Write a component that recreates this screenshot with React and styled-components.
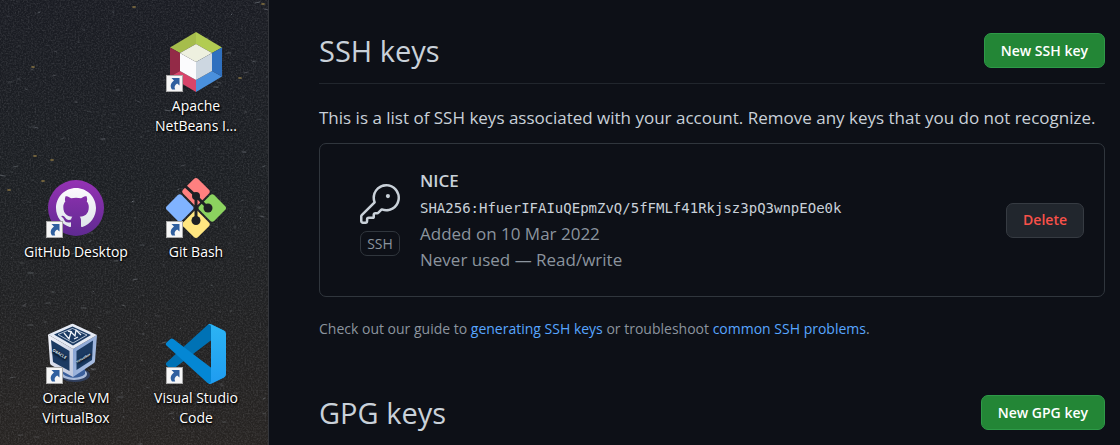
import React from "react";
import styled, { createGlobalStyle } from "styled-components";

const GlobalStyle = createGlobalStyle`
  *, *::before, *::after { box-sizing: border-box; }
  body {
    margin: 0;
    background: #0d1017;
    color: #c9d1d9;
    font-family: "Open Sans", "Noto Sans", sans-serif;
    font-size: 17px;
    line-height: 26px;
  }
  h2, h3, p, ul { margin: 0; padding: 0; }
`;

const Screen = styled.div`
  display: grid;
  grid-template-columns: 269px minmax(0, 1fr);
  min-height: 100vh;
`;

/* ---------- desktop ---------- */

const Desktop = styled.aside`
  position: relative;
  overflow: hidden;
  border-right: 1px solid #33353a;
  background: linear-gradient(180deg, #1a1c23 0%, #1c1f23 40%, #202123 65%, #272422 100%);
`;

const Sky = styled.svg`
  position: absolute;
  inset: 0;
  width: 100%;
  height: 100%;
`;

const IconGrid = styled.ul`
  position: relative;
  display: grid;
  grid-template-columns: 120px 120px;
  justify-content: center;
  row-gap: 42px;
  padding: 32px 12px 16px 16px;
  list-style: none;
`;

const IconCell = styled.li`
  grid-column: ${(p) => p.$column};
  min-height: 104px;
`;

const Shortcut = styled.a`
  display: flex;
  flex-direction: column;
  align-items: center;
  gap: 4px;
  color: #fff;
  font-size: 14px;
  line-height: 20px;
  text-align: center;
  text-decoration: none;
  text-shadow: 1px 1px 2px #000, 0 1px 3px #000;
`;

const IconBox = styled.span`
  position: relative;
  width: 60px;
  height: 60px;

  & > svg { display: block; overflow: visible; }
`;

const ArrowBadge = styled.span`
  position: absolute;
  left: 0;
  bottom: 0;
  width: 17px;
  height: 17px;
  border: 1px solid #a9a9a9;
  background: #f6f6f6;

  & > svg { display: block; }
`;

const Label = styled.span`
  width: 104px;
  white-space: ${(p) => (p.$oneLine ? "nowrap" : "normal")};
  display: flex;
  justify-content: center;
`;

/* ---------- settings page ---------- */

const Main = styled.main`
  padding: 28px 15px 0 50px;
`;

const SectionHeader = styled.header`
  display: flex;
  align-items: center;
  justify-content: space-between;
  padding-bottom: 10px;
  border-bottom: ${(p) => (p.$ruled ? "1px solid #21262d" : "0")};
`;

const Title = styled.h2`
  font-size: 29px;
  font-weight: 400;
  line-height: 45px;
`;

const Button = styled.button`
  height: 35px;
  padding: 0 16px;
  border: 1px solid ${(p) => (p.$danger ? "#363b42" : "#2e9a48")};
  border-radius: 7px;
  background: ${(p) => (p.$danger ? "#21262d" : "#238636")};
  color: ${(p) => (p.$danger ? "#f85149" : "#fff")};
  font-family: inherit;
  font-size: 14px;
  font-weight: 600;
  line-height: 20px;
  white-space: nowrap;
`;

const Intro = styled.p`
  padding: 21px 0 12px;
`;

const KeyCard = styled.article`
  display: flex;
  align-items: center;
  padding: 23px 20px;
  border: 1px solid #30363d;
  border-radius: 7px;
`;

const KeyType = styled.div`
  display: flex;
  flex-direction: column;
  align-items: center;
  gap: 7px;
  width: 40px;
  margin: 0 20px;
`;

const Tag = styled.span`
  width: 40px;
  border: 1px solid #30363d;
  border-radius: 7px;
  color: #8b949e;
  font-size: 14px;
  line-height: 23px;
  text-align: center;
`;

const KeyDetails = styled.div`
  flex: 1;
  min-width: 0;
  color: #8b949e;
`;

const KeyName = styled.h3`
  color: #c9d1d9;
  font-size: 17px;
  font-weight: 600;
  line-height: 28px;
`;

const Fingerprint = styled.code`
  display: block;
  color: #c9d1d9;
  font-family: "DejaVu Sans Mono", monospace;
  font-size: 14px;
  line-height: 26px;
`;

const Help = styled.p`
  padding: 21px 0 50px;
  color: #8b949e;
  font-size: 14px;
  line-height: 22px;
`;

const Link = styled.a`
  color: #58a6ff;
  text-decoration: none;
`;

/* ---------- drawings ---------- */

const makeTrails = () => {
  let seed = 41;
  const next = () => {
    seed = (seed * 16807) % 2147483647;
    return seed / 2147483647;
  };
  return Array.from({ length: 150 }, () => ({
    x: Math.round(next() * 268),
    y: Math.round(next() * 445),
    length: 1 + Math.round(next() * 4),
    tilt: Math.round(next() * 2) - 1,
    opacity: 0.12 + next() * 0.25,
  }));
};
const trails = makeTrails();
const warmStars = [
  [33, 67], [134, 7], [43, 181], [9, 190], [240, 78], [35, 156], [52, 160], [263, 4],
];

const NightSky = () => (
  <Sky aria-hidden="true">
    <filter id="grain" x="0" y="0" width="100%" height="100%">
      <feTurbulence type="fractalNoise" baseFrequency="0.6" numOctaves="2" seed="7" />
      <feColorMatrix values="0 0 0 0 0.75  0 0 0 0 0.75  0 0 0 0 0.78  0.5 0.5 0 0 -0.42" />
    </filter>
    <rect width="100%" height="100%" filter="url(#grain)" opacity="0.4" />
    {trails.map((t, i) => (
      <path key={i} d={`M${t.x} ${t.y}l${t.length} ${t.tilt}`} stroke="#b9c0c8" strokeOpacity={t.opacity} strokeLinecap="round" />
    ))}
    {warmStars.map(([x, y]) => (
      <ellipse key={`${x}-${y}`} cx={x} cy={y} rx="2" ry="1" fill="#a58a4a" opacity="0.65" />
    ))}
  </Sky>
);

const NetBeansLogo = () => (
  <svg width="60" height="60" viewBox="0 0 60 60">
    <path d="M30 0 4 15.500 14 21 30 12z" fill="#a6bd4c" />
    <path d="M30 0 56 15.500 46 21 30 12z" fill="#b2cc52" />
    <path d="M4 15.500v29L14 39V21z" fill="#932a47" />
    <path d="M56 15.500v29L46 39V21z" fill="#2f70bf" />
    <path d="M4 44.500 30 60V48L14 39z" fill="#d8456a" />
    <path d="M56 44.500 30 60V48l16-9z" fill="#4a90dd" />
    <path d="M30 12 46 21 30 30 14 21z" fill="#eef0df" />
    <path d="M14 21 30 30v18L14 39z" fill="#fbfbfd" />
    <path d="M46 21 30 30v18l16-9z" fill="#cdd7e1" />
  </svg>
);

const GitHubDesktopLogo = () => (
  <svg width="60" height="60" viewBox="0 0 60 60">
    <defs>
      <linearGradient id="ghPurple" x1="0" y1="0" x2="0" y2="1">
        <stop offset="0" stopColor="#9532b4" />
        <stop offset="1" stopColor="#5f2a91" />
      </linearGradient>
      <linearGradient id="ghWhite" x1="0" y1="0" x2="0" y2="1">
        <stop offset="0" stopColor="#fbf9fd" />
        <stop offset="1" stopColor="#dfe6ea" />
      </linearGradient>
    </defs>
    <circle cx="30" cy="30" r="28" fill="url(#ghPurple)" />
    <path
      transform="translate(10 10) scale(2.5)"
      fill="url(#ghWhite)"
      d="M8 0C3.580 0 0 3.580 0 8c0 3.540 2.290 6.530 5.470 7.590.4.070.55-.17.55-.38 0-.19-.010-.82-.010-1.490-2.010.37-2.530-.49-2.690-.94-.090-.23-.48-.94-.82-1.130-.28-.15-.68-.52-.010-.53.63-.010 1.080.58 1.230.82.72 1.210 1.870.87 2.330.66.070-.52.28-.87.51-1.070-1.780-.2-3.640-.89-3.640-3.950 0-.87.31-1.590.82-2.150-.080-.2-.36-1.020.080-2.120 0 0 .67-.21 2.200.82.64-.18 1.320-.27 2-.27s1.360.090 2 .27c1.530-1.040 2.200-.82 2.200-.82.44 1.100.16 1.920.080 2.120.51.56.82 1.270.82 2.150 0 3.070-1.870 3.750-3.650 3.950.29.25.54.73.54 1.480 0 1.070-.010 1.930-.010 2.200 0 .21.15.46.55.38A8.010 8.010 0 0 0 16 8c0-4.420-3.580-8-8-8z"
    />
  </svg>
);

const GitBashLogo = () => (
  <svg width="60" height="60" viewBox="0 0 60 60">
    <g transform="translate(30 30) rotate(45)">
      <rect x="-22" y="-22" width="21" height="21" rx="3" fill="#ff8080" />
      <rect x="1" y="-22" width="21" height="21" rx="3" fill="#8cd35f" />
      <rect x="1" y="1" width="21" height="21" rx="3" fill="#ffe680" />
      <rect x="-22" y="1" width="21" height="21" rx="3" fill="#80b3ff" />
    </g>
    <g fill="none" stroke="#1e2024" strokeWidth="3">
      <path d="M18 7 30 18 42 30" />
      <path d="M30 18v24" />
    </g>
    <g fill="#1e2024">
      <circle cx="30" cy="18" r="4" />
      <circle cx="42" cy="30" r="4.500" />
      <circle cx="30" cy="42.500" r="4.500" />
    </g>
  </svg>
);

const VirtualBoxLogo = () => (
  <svg width="60" height="60" viewBox="0 0 60 60">
    <defs>
      <linearGradient id="vbLeft" x1="0" y1="0" x2="1" y2="1">
        <stop offset="0" stopColor="#f4f5fb" />
        <stop offset="1" stopColor="#bcc5dc" />
      </linearGradient>
      <linearGradient id="vbRight" x1="0" y1="0" x2="1" y2="1">
        <stop offset="0" stopColor="#7c9bd0" />
        <stop offset="1" stopColor="#b7c8e6" />
      </linearGradient>
    </defs>
    <ellipse cx="29" cy="51" rx="15" ry="7" fill="#31405f" />
    <ellipse cx="28" cy="50" rx="13" ry="6" fill="#a9bbdb" />
    <path d="M17 45h22v5c-5 5-17 5-22 0z" fill="#3a5f9c" />
    <path d="M2 10.500 27 25v28L5 41q-1-1-1-2z" fill="url(#vbLeft)" />
    <path d="M51 11 27 25v28l21-14q1-1 1-2z" fill="url(#vbRight)" />
    <path d="M25.500 0q1-.6 2 0L51 11 27 25 2 10.500z" fill="#e6ebf5" />
    <path d="M26.500 2.500 45 11 27 21.500 8 10.500z" fill="#1b3a62" />
    <path d="M26.500 4.500 41 11 27 19 12 10.500z" fill="none" stroke="#d6e0ee" strokeWidth="0.800" />
    <path d="m18 9 5 6 2-7 4 4 1-6 5 5M22 7l4 1M28 15l4-2" fill="none" stroke="#eef3f9" strokeWidth="1.300" />
    <path d="M5 16 23.500 27v20L7 38z" fill="#1b3a62" />
    <path d="M47 16.500 30.500 27v19L46 36z" fill="#1b3a62" />
    <text transform="translate(6 27) rotate(31)" fill="#dfe7f2" fontFamily="Open Sans" fontWeight="700" fontSize="4">ORACLE</text>
    <text transform="translate(31 39) rotate(-31)" fill="#eef3f9" fontFamily="Open Sans" fontWeight="700" fontSize="3">VirtualBox</text>
  </svg>
);

const VSCodeLogo = () => (
  <svg width="60" height="60" viewBox="0 0 100 100">
    <defs>
      <linearGradient id="vsPanel" x1="0" y1="0" x2="0" y2="1">
        <stop offset="0" stopColor="#2cb4f4" />
        <stop offset="1" stopColor="#1f9cf0" />
      </linearGradient>
    </defs>
    <path fill="#0072b5" d="M96.461 10.796 75.857.876a6.230 6.230 0 0 0-7.107 1.207l-67.451 61.500a4.167 4.167 0 0 0 .004 6.162l5.510 5.009a4.167 4.167 0 0 0 5.320.236l81.228-61.620c2.725-2.067 6.639-.124 6.639 3.297v-.24a6.250 6.250 0 0 0-3.539-5.630Z" />
    <path fill="#0487d4" d="m96.461 89.204-20.604 9.920a6.229 6.229 0 0 1-7.107-1.207l-67.451-61.500a4.167 4.167 0 0 1 .004-6.162l5.510-5.009a4.167 4.167 0 0 1 5.320-.236l81.228 61.620c2.725 2.067 6.639.124 6.639-3.297v.24a6.250 6.250 0 0 1-3.539 5.630Z" />
    <path fill="url(#vsPanel)" d="M75.858 99.126a6.232 6.232 0 0 1-7.108-1.210c2.306 2.307 6.250.674 6.250-2.588V4.672c0-3.262-3.944-4.895-6.250-2.589a6.232 6.232 0 0 1 7.108-1.210l20.600 9.908A6.250 6.250 0 0 1 100 16.413v67.174a6.250 6.250 0 0 1-3.541 5.633l-20.601 9.906Z" />
  </svg>
);

const ShortcutArrow = () => (
  <svg width="15" height="15" viewBox="0 0 15 15">
    <path d="M4.500 2H12.500V9.500L10.200 7.500C7.600 9 7 11 8.200 13.500H5C2.600 10.500 3.800 6.800 7 4.600z" fill="#2f5f9f" />
  </svg>
);

const KeyIcon = () => (
  <svg width="40" height="40" viewBox="0 0 24 24" fill="#c9d1d9" aria-hidden="true">
    <path d="M16.750 8.500a1.250 1.250 0 100-2.500 1.250 1.250 0 000 2.500z" />
    <path
      fillRule="evenodd"
      d="M15.750 0a8.250 8.250 0 00-7.851 10.790L.513 18.178A1.750 1.750 0 000 19.414v2.836C0 23.217.784 24 1.750 24h1.500A1.750 1.750 0 005 22.250v-1a.25.25 0 01.25-.25h2.735a.75.75 0 00.545-.22l.214-.213A.875.875 0 009 19.948V18.500a.25.25 0 01.25-.25h1.086c.464 0 .91-.184 1.237-.513l1.636-1.636A8.250 8.250 0 1015.750 0zM9 8.250a6.750 6.750 0 114.288 6.287.75.75 0 00-.804.168l-1.971 1.972a.25.25 0 01-.177.073H9.250A1.750 1.750 0 007.500 18.500v1H5.250a1.750 1.750 0 00-1.750 1.750v1a.25.25 0 01-.25.25h-1.500a.25.25 0 01-.25-.25v-2.836a.25.25 0 01.073-.177l7.722-7.721a.75.75 0 00.168-.804A6.730 6.730 0 019 8.250z"
    />
  </svg>
);

const shortcuts = [
  { name: "Apache NetBeans I...", column: 2, Logo: NetBeansLogo },
  { name: "GitHub Desktop", column: 1, Logo: GitHubDesktopLogo, oneLine: true },
  { name: "Git Bash", column: 2, Logo: GitBashLogo, oneLine: true },
  { name: "Oracle VM VirtualBox", column: 1, Logo: VirtualBoxLogo },
  { name: "Visual Studio Code", column: 2, Logo: VSCodeLogo },
];

export default function App() {
  return (
    <>
      <GlobalStyle />
      <Screen>
        <Desktop>
          <NightSky />
          <IconGrid>
            {shortcuts.map(({ name, column, Logo, oneLine }) => (
              <IconCell key={name} $column={column}>
                <Shortcut href="#">
                  <IconBox>
                    <Logo />
                    <ArrowBadge>
                      <ShortcutArrow />
                    </ArrowBadge>
                  </IconBox>
                  <Label $oneLine={oneLine}>{name}</Label>
                </Shortcut>
              </IconCell>
            ))}
          </IconGrid>
        </Desktop>

        <Main>
          <SectionHeader $ruled>
            <Title>SSH keys</Title>
            <Button type="button">New SSH key</Button>
          </SectionHeader>
          <Intro>
            This is a list of SSH keys associated with your account. Remove any keys that you do not recognize.
          </Intro>
          <KeyCard>
            <KeyType>
              <KeyIcon />
              <Tag>SSH</Tag>
            </KeyType>
            <KeyDetails>
              <KeyName>NICE</KeyName>
              <Fingerprint>SHA256:HfuerIFAIuQEpmZvQ/5fFMLf41Rkjsz3pQ3wnpEOe0k</Fingerprint>
              <p>Added on 10 Mar 2022</p>
              <p>Never used — Read/write</p>
            </KeyDetails>
            <Button type="button" $danger>Delete</Button>
          </KeyCard>
          <Help>
            Check out our guide to <Link href="#">generating SSH keys</Link> or troubleshoot{" "}
            <Link href="#">common SSH problems</Link>.
          </Help>
          <SectionHeader>
            <Title>GPG keys</Title>
            <Button type="button">New GPG key</Button>
          </SectionHeader>
        </Main>
      </Screen>
    </>
  );
}
